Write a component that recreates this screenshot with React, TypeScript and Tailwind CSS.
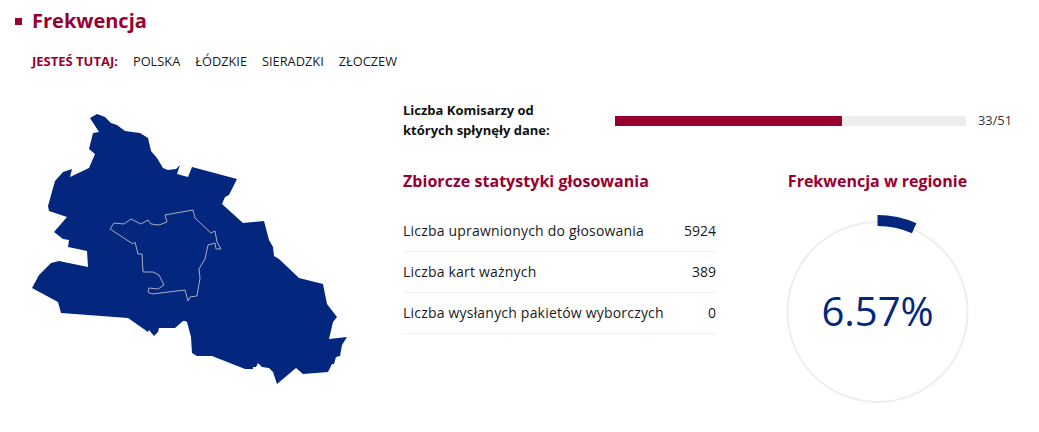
const outline = "90,118 97,114 105,117 111,123 117,125 125,131 140,133 148,138 151,151 157,158 163,168 168,170 176,169 180,165 177,174 188,177 192,167 237,179 229,195 225,197 222,204 243,223 264,221 269,240 273,247 274,256 279,259 299,278 323,284 327,304 337,317 333,322 329,339 347,337 342,345 340,356 336,357 334,364 332,364 328,372 303,374 296,368 277,384 273,372 269,368 262,367 258,363 256,367 253,367 253,369 245,369 212,356 197,356 192,353 191,337 187,322 185,321 183,321 175,328 159,328 158,332 154,336 149,330 148,332 128,318 61,313 58,302 32,288 39,275 51,263 59,261 88,267 87,251 68,247 69,240 63,239 54,232 67,217 49,211 48,206 55,181 63,172 72,169 70,177 89,168 95,154 89,149 93,133 99,132";
const inner = "110,229 114,223 124,224 131,219 141,224 148,220 151,224 159,225 167,222 165,215 193,210 195,218 211,233 215,231 217,242 221,249 216,249 215,243 208,245 205,259 199,269 200,278 197,296 190,297 188,301 185,290 152,294 148,292 149,288 158,289 164,285 159,275 153,272 143,272 142,254 138,254 135,242 133,244";

const rows: [string, string][] = [
  ["Liczba uprawnionych do głosowania", "5924"],
  ["Liczba kart ważnych", "389"],
  ["Liczba wysłanych pakietów wyborczych", "0"],
];

const crumbs = ["POLSKA", "ŁÓDZKIE", "SIERADZKI", "ZŁOCZEW"];

export default function App() {
  return (
    <div className="w-[1039px] h-[432px] overflow-hidden bg-white font-['Open_Sans',sans-serif] text-[#1a1a1a]">
      <header className="flex items-center h-[28px] mt-[7px] pl-[15px]">
        <span className="w-[7px] h-[7px] bg-[#98002e] mr-[10px]" />
        <h1 className="text-[20px] leading-[28px] font-bold text-[#98002e]">Frekwencja</h1>
      </header>
      <nav className="flex items-center h-[20px] mt-[16px] pl-[32px] text-[12.8px] leading-[20px]">
        <span className="font-bold text-[13px] text-[#98002e] mr-[15px]">JESTEŚ TUTAJ:</span>
        <div className="flex gap-[15px]">
          {crumbs.map((c) => (
            <span key={c}>{c}</span>
          ))}
        </div>
      </nav>
      <main className="flex mt-[29px]">
        <div className="w-[403px] shrink-0">
          <svg viewBox="0 100 403 300" width={403} height={300} className="block">
            <polygon points={outline} fill="#03277e" />
            <polygon points={inner} fill="none" stroke="#a9aec0" strokeWidth={1} />
          </svg>
        </div>
        <div className="w-[636px] shrink-0">
          <div className="flex items-center h-[40px] mt-[1px]">
            <div className="w-[212px] mb-[2px] text-[13px] leading-[20px] font-bold text-[#111]">
              Liczba Komisarzy od<br />których spłynęły dane:
            </div>
            <div className="w-[351px] h-[10px] bg-[#eeeeee]">
              <div className="h-full w-[227px] bg-[#98002e]" />
            </div>
            <span className="ml-[12px] text-[12.8px] text-[#333]">33/51</span>
          </div>
          <div className="flex mt-[28px]">
            <section className="w-[313px]">
              <h2 className="text-[16px] tracking-[0.04px] leading-[24px] font-bold text-[#98002e]">Zbiorcze statystyki głosowania</h2>
              <div className="mt-[18px]">
                {rows.map(([label, value]) => (
                  <div key={label} className="flex justify-between items-center h-[41px] pb-[2px] border-b border-[#f0f0f0] text-[14px]">
                    <span className="tracking-[0.2px]">{label}</span>
                    <span>{value}</span>
                  </div>
                ))}
              </div>
            </section>
            <section className="ml-[59px] w-[205px] flex flex-col items-center">
              <h2 className="text-[16px] leading-[24px] font-bold text-[#98002e] whitespace-nowrap">Frekwencja w regionie</h2>
              <div className="relative w-[205px] h-[200px] mt-[16px] flex items-center justify-center">
                <svg viewBox="0 0 205 200" width={205} height={200} className="absolute inset-0">
                  <circle cx="102.5" cy="103" r="90" fill="none" stroke="#eeeeee" strokeWidth={2} />
                  <path d="M102.5 11.5 A91.5 91.5 0 0 1 139.2 19.2" fill="none" stroke="#03277e" strokeWidth={11} />
                </svg>
                <span className="relative text-[40px] leading-[50px] mt-[4px] text-[#03277e]">6.57%</span>
              </div>
            </section>
          </div>
        </div>
      </main>
    </div>
  );
}
